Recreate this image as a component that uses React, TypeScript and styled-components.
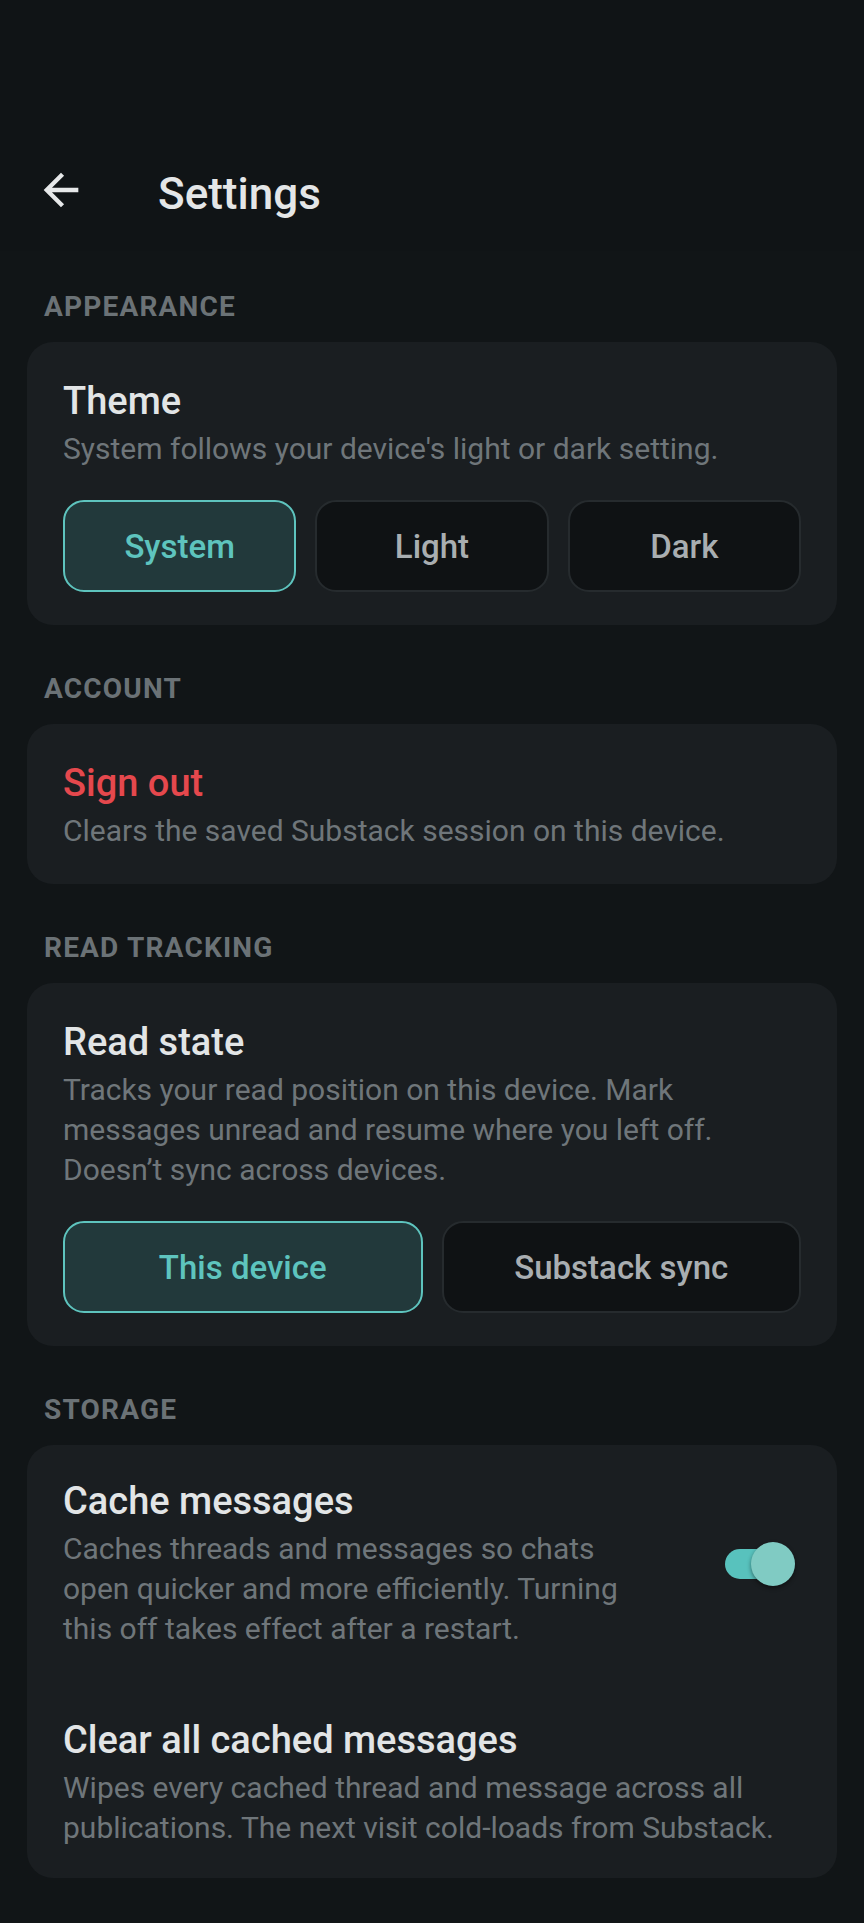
import styled, { createGlobalStyle } from "styled-components";

const GlobalStyle = createGlobalStyle`
  html, body {
    margin: 0;
    padding: 0;
    background: #111517;
  }
  body {
    font-family: Roboto, "Noto Sans", "Liberation Sans", sans-serif;
    -webkit-font-smoothing: antialiased;
  }
  * {
    box-sizing: border-box;
  }
`;

const Page = styled.div`
  width: 864px;
  min-height: 1923px;
  background: #111517;
`;

const Header = styled.header`
  height: 251px;
  padding: 136px 0 0 35px;
  display: flex;
  align-items: center;
  background: #101416;
`;

const BackButton = styled.button`
  width: 52px;
  height: 52px;
  padding: 0;
  margin: 0 71px 7px 0;
  border: none;
  background: transparent;
  color: #e6e8e9;
  display: flex;
  svg {
    width: 52px;
    height: 52px;
    fill: currentColor;
  }
`;

const Title = styled.h1`
  margin: 0;
  font-size: 44px;
  font-weight: 500;
  color: #e4e6e7;
  line-height: 1;
`;

const Content = styled.main`
  padding: 0 27px 44px;
`;

const Section = styled.section<{ $first?: boolean }>`
  margin-top: ${(p) => (p.$first ? "39px" : "47px")};
`;

const SectionLabel = styled.h2`
  margin: 0 0 18px 17px;
  font-size: 28px;
  line-height: 34px;
  font-weight: 700;
  letter-spacing: 1.2px;
  color: #6b7276;
`;

const Card = styled.div<{ $flush?: boolean }>`
  background: #1a1e21;
  border-radius: 26px;
  padding: ${(p) => (p.$flush ? "0" : "36px 36px 33px")};
`;

const ItemTitle = styled.div<{ $danger?: boolean }>`
  font-size: 38px;
  line-height: 46px;
  font-weight: 500;
  color: ${(p) => (p.$danger ? "#e5484d" : "#e2e5e6")};
`;

const ItemDesc = styled.p`
  margin: 5px 0 0;
  font-size: 30px;
  line-height: 40px;
  color: #6f767a;
`;

const Choices = styled.div<{ $cols: number }>`
  margin-top: 31px;
  display: grid;
  grid-template-columns: repeat(${(p) => p.$cols}, 1fr);
  gap: 19px;
`;

const Choice = styled.button<{ $active?: boolean }>`
  height: 92px;
  border-radius: 21px;
  border: 2px solid ${(p) => (p.$active ? "#5ec4be" : "#262b2e")};
  background: ${(p) => (p.$active ? "#22393b" : "#0f1214")};
  color: ${(p) => (p.$active ? "#5ec4be" : "#a9aeb1")};
  font-family: inherit;
  font-size: 33px;
  font-weight: 500;
  cursor: pointer;
`;

const Row = styled.div<{ $last?: boolean }>`
  display: flex;
  align-items: center;
  gap: 80px;
  padding: ${(p) => (p.$last ? "34px 36px 30px" : "33px 36px 34px")};
`;

const RowText = styled.div`
  flex: 1;
  min-width: 0;
`;

const Switch = styled.div`
  position: relative;
  flex: none;
  width: 70px;
  height: 44px;
  margin-right: 6px;
`;

const Track = styled.div`
  position: absolute;
  left: 0;
  top: 7px;
  width: 60px;
  height: 30px;
  border-radius: 15px;
  background: #58c2bd;
`;

const Thumb = styled.div`
  position: absolute;
  right: 0;
  top: 0;
  width: 44px;
  height: 44px;
  border-radius: 50%;
  background: #80cbc3;
  box-shadow: 0 2px 4px rgba(0, 0, 0, 0.45);
`;

const ArrowBack = () => (
  <svg viewBox="0 0 24 24" aria-hidden="true">
    <path d="M20 11H7.83l5.59-5.59L12 4l-8 8 8 8 1.41-1.41L7.83 13H20v-2z" />
  </svg>
);

const themes = ["System", "Light", "Dark"];
const readModes = ["This device", "Substack sync"];

function App() {
  return (
    <Page>
      <GlobalStyle />
      <Header>
        <BackButton aria-label="Back">
          <ArrowBack />
        </BackButton>
        <Title>Settings</Title>
      </Header>
      <Content>
        <Section $first>
          <SectionLabel>APPEARANCE</SectionLabel>
          <Card>
            <ItemTitle>Theme</ItemTitle>
            <ItemDesc>System follows your device's light or dark setting.</ItemDesc>
            <Choices $cols={3}>
              {themes.map((t) => (
                <Choice key={t} $active={t === "System"}>
                  {t}
                </Choice>
              ))}
            </Choices>
          </Card>
        </Section>

        <Section>
          <SectionLabel>ACCOUNT</SectionLabel>
          <Card>
            <ItemTitle $danger>Sign out</ItemTitle>
            <ItemDesc>Clears the saved Substack session on this device.</ItemDesc>
          </Card>
        </Section>

        <Section>
          <SectionLabel>READ TRACKING</SectionLabel>
          <Card>
            <ItemTitle>Read state</ItemTitle>
            <ItemDesc>
              Tracks your read position on this device. Mark messages unread and
              resume where you left off. Doesn’t sync across devices.
            </ItemDesc>
            <Choices $cols={2}>
              {readModes.map((m) => (
                <Choice key={m} $active={m === "This device"}>
                  {m}
                </Choice>
              ))}
            </Choices>
          </Card>
        </Section>

        <Section>
          <SectionLabel>STORAGE</SectionLabel>
          <Card $flush>
            <Row>
              <RowText>
                <ItemTitle>Cache messages</ItemTitle>
                <ItemDesc>
                  Caches threads and messages so chats open quicker and more
                  efficiently. Turning this off takes effect after a restart.
                </ItemDesc>
              </RowText>
              <Switch role="switch" aria-checked="true">
                <Track />
                <Thumb />
              </Switch>
            </Row>
            <Row $last>
              <RowText>
                <ItemTitle>Clear all cached messages</ItemTitle>
                <ItemDesc>
                  Wipes every cached thread and message across all publications.
                  The next visit cold-loads from Substack.
                </ItemDesc>
              </RowText>
            </Row>
          </Card>
        </Section>
      </Content>
    </Page>
  );
}

export default App;
